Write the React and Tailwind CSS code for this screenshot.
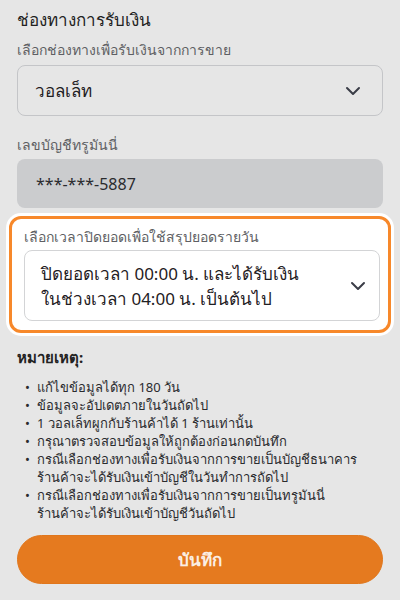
import { ChevronDown } from 'lucide-react';

const notes = [
  ['แก้ไขข้อมูลได้ทุก 180 วัน'],
  ['ข้อมูลจะอัปเดตภายในวันถัดไป'],
  ['1 วอลเล็ทผูกกับร้านค้าได้ 1 ร้านเท่านั้น'],
  ['กรุณาตรวจสอบข้อมูลให้ถูกต้องก่อนกดบันทึก'],
  ['กรณีเลือกช่องทางเพื่อรับเงินจากการขายเป็นบัญชีธนาคาร', 'ร้านค้าจะได้รับเงินเข้าบัญชีในวันทำการถัดไป'],
  ['กรณีเลือกช่องทางเพื่อรับเงินจากการขายเป็นทรูมันนี่', 'ร้านค้าจะได้รับเงินเข้าบัญชีวันถัดไป'],
];

const App = () => {
  return (
    <div
      className="w-[400px] h-[600px] bg-[#e6e6e6] text-[#1f2023] overflow-hidden"
      style={{ fontFamily: '"Noto Sans", sans-serif' }}
    >
      <div className="px-[17px] pt-[6px]">
        <h2 className="h-[28px] text-[17px] leading-[28px] text-[#222]">ช่องทางการรับเงิน</h2>

        {/* payout channel */}
        <label className="block mt-[5px] h-[22px] text-[14px] leading-[22px] text-[#5e5f63]">
          เลือกช่องทางเพื่อรับเงินจากการขาย
        </label>
        <div className="mt-[4px] h-[51px] flex items-center justify-between rounded-[8px] border border-[#c4c5c8] pl-[17px] pr-[17px]">
          <span className="text-[17px]">วอลเล็ท</span>
          <ChevronDown size={24} strokeWidth={2} className="text-[#3a3d47]" />
        </div>

        {/* account */}
        <label className="block mt-[18px] h-[22px] text-[14px] leading-[22px] text-[#5e5f63]">
          เลขบัญชีทรูมันนี่
        </label>
        <div className="mt-[3px] h-[49px] flex items-center rounded-[8px] bg-[#cbccce] pl-[19px] text-[16px] text-[#2a2b2e]">
          ***-***-5887
        </div>
      </div>

      {/* highlighted cutoff select */}
      <div className="ml-[6px] mr-[6px] mt-[5px] rounded-[15px] bg-white p-[3px]">
        <div className="rounded-[12px] border-[3px] border-[#f7882a] bg-white pl-[12px] pr-[8px] pt-[7px] pb-[9px]">
          <label className="block h-[22px] text-[14px] leading-[22px] text-[#5e5f63]">
            เลือกเวลาปิดยอดเพื่อใช้สรุปยอดรายวัน
          </label>
          <div className="mt-[2px] h-[71px] flex items-center justify-between rounded-[8px] border border-[#d3d4d6] pl-[16px] pr-[9px]">
            <span className="text-[17px] leading-[25px]">
              ปิดยอดเวลา 00:00 น. และได้รับเงิน
              <br />
              ในช่วงเวลา 04:00 น. เป็นต้นไป
            </span>
            <ChevronDown size={24} strokeWidth={2} className="text-[#3a3d47]" />
          </div>
        </div>
      </div>

      <div className="px-[17px] mt-[10px]">
        <h3 className="h-[22px] text-[15px] font-bold leading-[22px] text-[#222]">หมายเหตุ:</h3>
        <ul className="mt-[10px] pl-[8px] text-[13px] leading-[18px] text-[#2a2b2e]">
          {notes.map((lines, i) => (
            <li key={i} className="flex">
              <span className="w-[12px] h-[18px] shrink-0">•</span>
              <div>
                {lines.map((l, j) => (
                  <div key={j} className="h-[18px] whitespace-nowrap">{l}</div>
                ))}
              </div>
            </li>
          ))}
        </ul>

        <button className="mt-[13px] w-full h-[49px] rounded-full bg-[#e57a1f] border border-[#e0761c] text-[17px] font-bold text-[#fbeee3]">
          บันทึก
        </button>
      </div>
    </div>
  );
};

export default App;
